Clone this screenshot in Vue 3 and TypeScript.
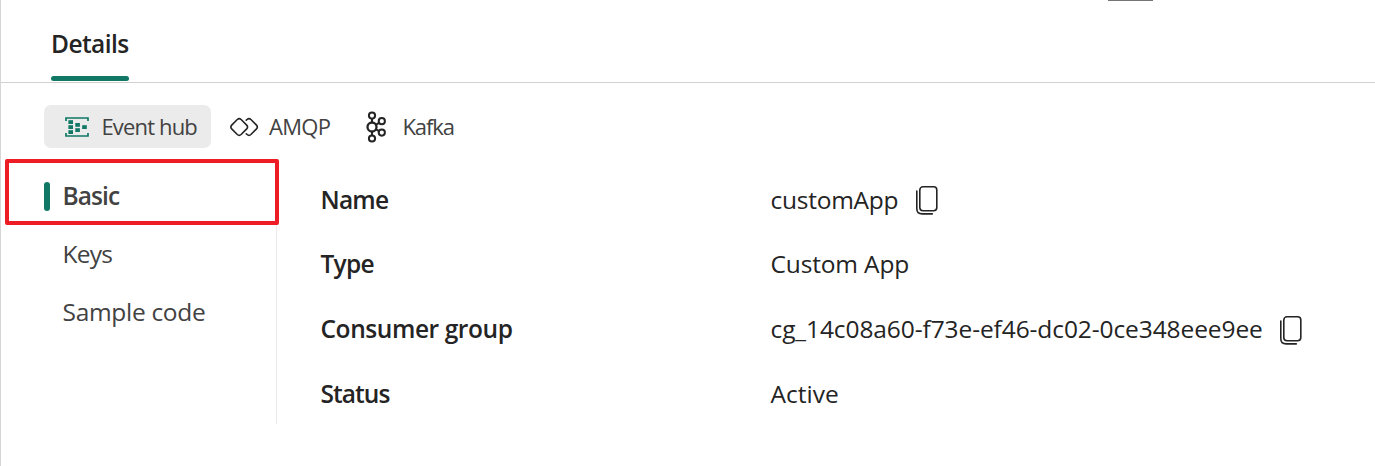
<script setup lang="ts">
interface Field {
  label: string
  value: string
  copyable?: boolean
  labelClass: string
  valueClass: string
}

const sections = [
  { name: 'Basic', cls: 's-basic active' },
  { name: 'Keys', cls: 's-keys' },
  { name: 'Sample code', cls: 's-sample' },
]

const fields: Field[] = [
  { label: 'Name', value: 'customApp', copyable: true, labelClass: 'l-name', valueClass: 'v-name' },
  { label: 'Type', value: 'Custom App', labelClass: 'l-type', valueClass: 'v-type' },
  { label: 'Consumer group', value: 'cg_14c08a60-f73e-ef46-dc02-0ce348eee9ee', copyable: true, labelClass: 'l-group', valueClass: 'v-group' },
  { label: 'Status', value: 'Active', labelClass: 'l-status', valueClass: 'v-status' },
]
</script>

<template>
  <div class="panel">
    <div class="grip"></div>
    <header class="tabs">
      <div class="tab"><span class="t-details">Details</span></div>
    </header>

    <nav class="protocols">
      <button class="protocol hub selected">
        <svg width="26" height="22" viewBox="0 0 26 22">
          <path d="M2 5V2H24V5M2 17V20H24V17" fill="none" stroke="#117865" stroke-width="1.7" />
          <g fill="#117865">
            <rect x="4.4" y="4.2" width="4.6" height="3.8" />
            <rect x="4.4" y="9.2" width="4.6" height="3.8" />
            <rect x="4.4" y="14.2" width="4.6" height="3.8" />
            <rect x="11.3" y="7" width="4.6" height="3.8" />
            <rect x="11.3" y="12.2" width="4.6" height="3.8" />
            <rect x="18.2" y="9.2" width="4.6" height="3.8" />
          </g>
        </svg>
        <span class="p-hub">Event hub</span>
      </button>
      <button class="protocol amqp">
        <svg width="30" height="20" viewBox="-0.7 0 30 20" fill="none" stroke="#242424" stroke-width="1.6" stroke-linecap="round" stroke-linejoin="round">
          <path d="M7.6 2.5Q9.5 .8 11.4 2.5L17 8.1Q18.7 10 17 11.9L11.4 17.5Q9.5 19.2 7.6 17.5L2 11.9Q.3 10 2 8.1Z" />
          <path d="M16.6 3.2L17.4 2.5Q19.3 .8 21.2 2.5L26.8 8.1Q28.5 10 26.8 11.9L21.2 17.5Q19.3 19.2 17.4 17.5L16.6 16.8" />
        </svg>
        <span class="p-amqp">AMQP</span>
      </button>
      <button class="protocol kafka">
        <svg width="22" height="32" viewBox="0 0 22 32" fill="none" stroke="#242424" stroke-width="2">
          <circle cx="6" cy="4.6" r="3.1" />
          <circle cx="6" cy="16" r="4.5" stroke-width="2.3" />
          <circle cx="6" cy="27.5" r="3.1" />
          <circle cx="15.8" cy="10.2" r="3.1" />
          <circle cx="15.8" cy="21.6" r="3.1" />
          <path d="M6 7.7V11.5M6 20.5V24.4M10 13.7L13.1 11.8M10 18.3L13.1 20.1" />
        </svg>
        <span class="p-kafka">Kafka</span>
      </button>
    </nav>

    <main class="content">
      <aside class="sections">
        <div v-for="s in sections" :key="s.name" class="section" :class="s.cls">
          <span>{{ s.name }}</span>
        </div>
        <div class="highlight"></div>
      </aside>
      <dl class="fields">
        <div v-for="f in fields" :key="f.label" class="field">
          <dt><span :class="f.labelClass">{{ f.label }}</span></dt>
          <dd>
            <span :class="f.valueClass">{{ f.value }}</span>
            <svg v-if="f.copyable" class="copy" width="24" height="30" viewBox="0 0 24 30" fill="none" stroke="#242424" stroke-width="1.6" stroke-linecap="round">
              <rect x="4.8" y="1.8" width="17" height="24" rx="3.2" />
              <path d="M1.8 6V23.5Q1.8 28.9 7.2 28.9H17.3" />
            </svg>
          </dd>
        </div>
      </dl>
    </main>
  </div>
</template>

<style>
body {
  background: #fff;
  overflow: hidden;
}
</style>

<style scoped>
.panel {
  position: relative;
  box-sizing: border-box;
  width: 1375px;
  height: 466px;
  border-left: 1px solid #d6d6d6;
  background: #fff;
  color: #242424;
  font-family: "Open Sans", "Noto Sans", sans-serif;
  font-size: 24.5px;
  white-space: nowrap;
  overflow: hidden;
}
span {
  display: block;
}
.grip {
  position: absolute;
  left: 1107px;
  top: 0;
  width: 45px;
  height: 1px;
  background: #757575;
}
.tabs {
  box-sizing: border-box;
  height: 83px;
  padding-left: 50px;
  display: flex;
  border-bottom: 1px solid #d1d1d1;
}
.tab {
  position: relative;
  width: 78px;
  height: 82px;
  line-height: 88px;
  font-weight: 560;
}
.tab::after {
  content: "";
  position: absolute;
  left: 0;
  bottom: 1px;
  width: 78px;
  height: 5px;
  border-radius: 3px;
  background: #117865;
}
.protocols {
  display: flex;
  height: 43px;
  padding: 22px 0 0 43px;
}
.protocol {
  box-sizing: border-box;
  display: flex;
  align-items: center;
  height: 43px;
  padding: 0;
  border: 0;
  border-radius: 7px;
  background: transparent;
  color: #424242;
  font: 22px/43px "Open Sans", "Noto Sans", sans-serif;
}
.protocol svg {
  flex: none;
}
.hub {
  width: 167px;
  padding-left: 20px;
  gap: 11.5px;
}
.selected {
  background: #ebebeb;
}
.amqp {
  width: 136px;
  padding-left: 18px;
  gap: 10px;
}
.kafka {
  padding-left: 19px;
  gap: 14.5px;
}
.p-hub {
  letter-spacing: -0.85px;
}
.p-amqp {
  letter-spacing: -0.7px;
}
.p-kafka {
  letter-spacing: -1.1px;
}
.t-details {
  letter-spacing: -0.55px;
}
.s-basic span {
  letter-spacing: -0.9px;
}
.s-keys span {
  letter-spacing: -0.8px;
}
.s-sample span {
  letter-spacing: -0.3px;
}
.l-name {
  letter-spacing: -0.8px;
}
.l-type {
  letter-spacing: -0.75px;
}
.l-group {
  letter-spacing: -0.42px;
}
.l-status {
  letter-spacing: -0.95px;
}
.v-name {
  letter-spacing: -0.25px;
}
.v-type {
  letter-spacing: -0.15px;
}
.v-group {
  letter-spacing: -0.09px;
}
.content {
  display: flex;
  height: 276px;
  padding-top: 12px;
}
.sections {
  position: relative;
  box-sizing: border-box;
  width: 276px;
  height: 264px;
  padding: 7px 0 0 43px;
  border-right: 1px solid #ebebeb;
  color: #424242;
}
.section {
  display: flex;
  align-items: center;
  height: 58px;
  padding-left: 18.5px;
  line-height: 58px;
}
.active {
  position: relative;
  font-weight: 560;
}
.active::before {
  content: "";
  position: absolute;
  left: 0;
  top: 15px;
  width: 6px;
  height: 29px;
  border-radius: 3px;
  background: #117865;
}
.highlight {
  position: absolute;
  box-sizing: border-box;
  left: 4px;
  top: -1px;
  width: 274px;
  height: 66px;
  border: 4px solid #ee1c25;
  border-radius: 2px;
}
.fields {
  margin: 0;
  padding: 8px 0 0 43.5px;
}
.field {
  display: flex;
  height: 64px;
  line-height: 64px;
}
.field:nth-child(3) {
  height: 66px;
  line-height: 66px;
}
dt {
  width: 450px;
  font-weight: 560;
}
dd {
  display: flex;
  align-items: center;
  margin: 0;
}
.copy {
  flex: none;
  margin-left: 17px;
}
.v-group + .copy {
  margin: 2px 0 0 16px;
}
</style>
